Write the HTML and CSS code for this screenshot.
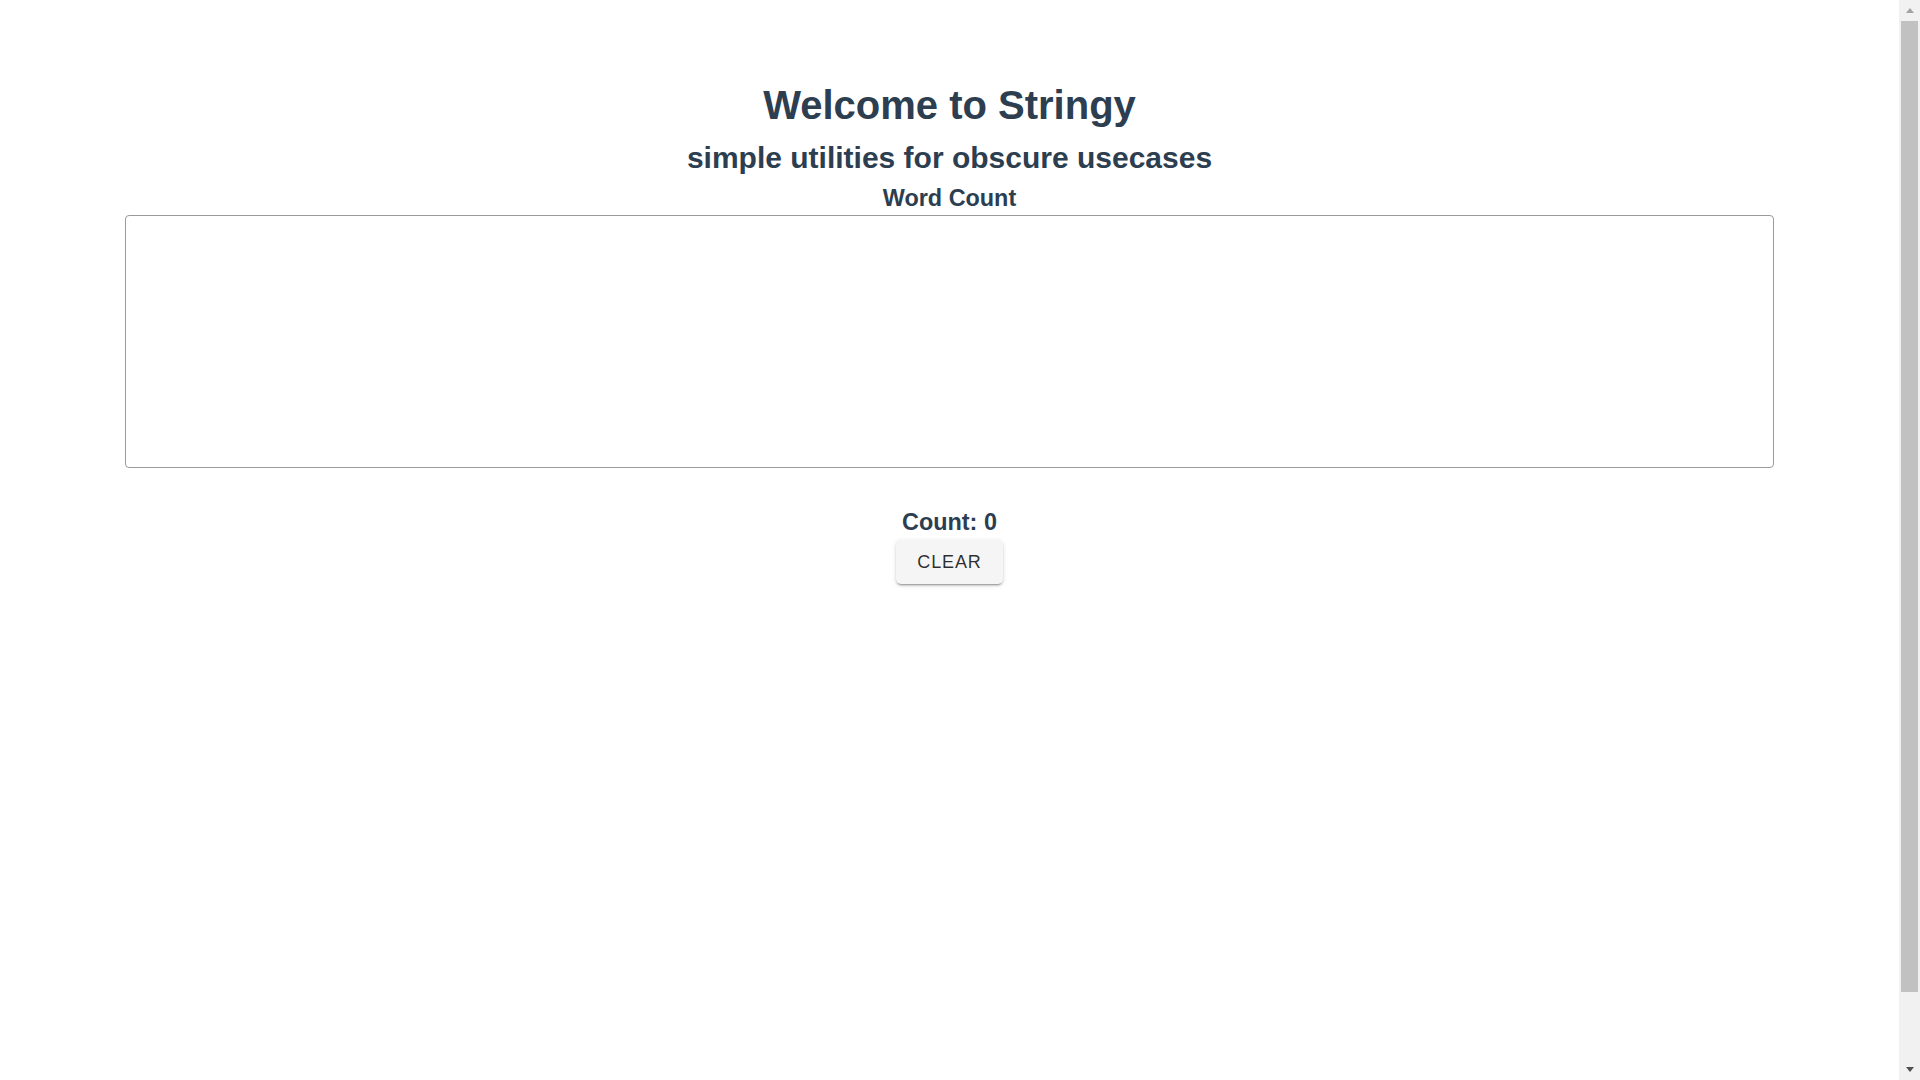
FILE: index.html
```html
<!DOCTYPE html>
<html lang="en">
<head>
<meta charset="utf-8">
<title>Stringy</title>
<link rel="stylesheet" href="styles.css">
</head>
<body>
<main class="app">
  <h1 class="title">Welcome to Stringy</h1>
  <h2 class="subtitle">simple utilities for obscure usecases</h2>
  <section class="tool">
    <h3 class="tool-title">Word Count</h3>
    <textarea class="tool-input" aria-label="Word Count input"></textarea>
    <h3 class="tool-count">Count: 0</h3>
    <button class="btn" type="button">Clear</button>
  </section>
</main>
<div class="scrollbar" aria-hidden="true">
  <div class="sb-button"><span class="sb-arrow sb-arrow-up"></span></div>
  <div class="sb-thumb"></div>
  <div class="sb-track"></div>
  <div class="sb-button"><span class="sb-arrow sb-arrow-down"></span></div>
</div>
</body>
</html>
```

FILE: styles.css
```css
html, body {
  margin: 0;
  padding: 0;
  background: #ffffff;
}

body {
  display: flex;
  height: 100vh;
  overflow: hidden;
}

.app {
  flex: 1;
  min-width: 0;
  box-sizing: border-box;
  padding-top: 82px;
  font-family: "Liberation Sans", Arial, Helvetica, sans-serif;
  color: #2c3e50;
  text-align: center;
  display: flex;
  flex-direction: column;
  align-items: center;
}

.title {
  margin: 0;
  font-size: 40px;
  line-height: 46px;
  font-weight: bold;
}

.subtitle {
  margin: 12px 0 0;
  font-size: 30px;
  line-height: 35px;
  font-weight: bold;
}

.tool {
  align-self: stretch;
  display: flex;
  flex-direction: column;
  align-items: center;
  margin-top: 10px;
}

.tool-title {
  margin: 0;
  font-size: 23.4px;
  line-height: 26px;
  font-weight: bold;
}

.tool-input {
  box-sizing: border-box;
  align-self: stretch;
  margin: 4px 125px 0;
  height: 253px;
  border: 1px solid #9a9a9a;
  border-radius: 4px;
  background: #ffffff;
  resize: none;
  outline: none;
  font-family: "Liberation Sans", Arial, sans-serif;
  font-size: 16px;
  padding: 4px;
}

.tool-count {
  margin: 41px 0 0;
  font-size: 23.4px;
  line-height: 26px;
  font-weight: bold;
}

.btn {
  margin-top: 5px;
  height: 44px;
  padding: 0 21px;
  border: none;
  border-radius: 5px;
  background: #f5f5f5;
  color: rgba(0, 0, 0, 0.82);
  font-family: "Liberation Sans", Arial, sans-serif;
  font-size: 18px;
  line-height: 24px;
  letter-spacing: 0.9px;
  text-transform: uppercase;
  cursor: pointer;
  box-shadow: 0 3px 1px -2px rgba(0, 0, 0, 0.2),
              0 2px 2px 0 rgba(0, 0, 0, 0.14),
              0 1px 5px 0 rgba(0, 0, 0, 0.12);
}

/* Browser-style vertical scrollbar */
.scrollbar {
  flex: 0 0 21px;
  width: 21px;
  height: 100%;
  background: #f1f1f1;
  display: flex;
  flex-direction: column;
}

.sb-button {
  flex: 0 0 21px;
  display: flex;
  align-items: center;
  justify-content: center;
}

.sb-arrow {
  width: 0;
  height: 0;
  border-left: 4.5px solid transparent;
  border-right: 4.5px solid transparent;
}

.sb-arrow-up {
  border-bottom: 5px solid #a3a3a3;
}

.sb-arrow-down {
  border-top: 5px solid #505050;
}

.sb-thumb {
  flex: 0 0 971px;
  margin: 0 2px;
  background: #c1c1c1;
}

.sb-track {
  flex: 1;
}
```
